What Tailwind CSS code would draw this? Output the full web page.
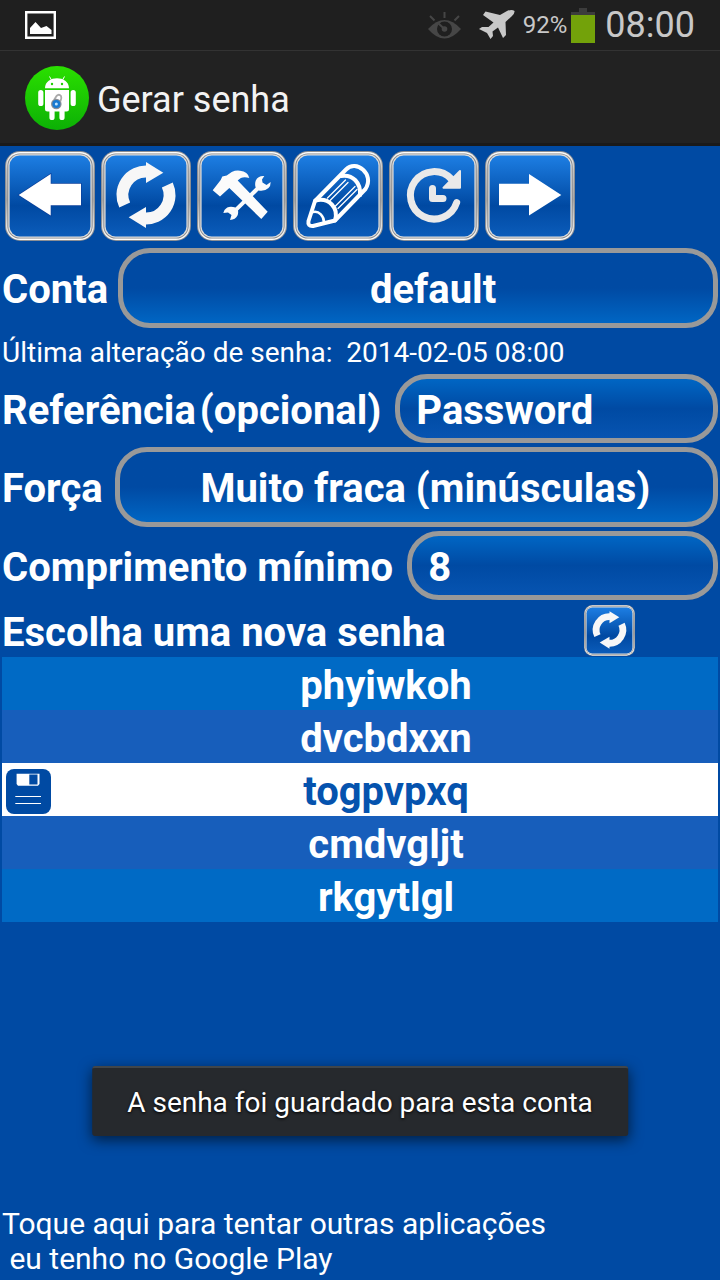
<!DOCTYPE html>
<html lang="pt">
<head>
<meta charset="utf-8">
<meta name="viewport" content="width=device-width, initial-scale=1">
<title>Gerar senha</title>
<script src="https://cdn.jsdelivr.net/npm/@tailwindcss/browser@4"></script>
</head>
<body class="relative flex min-h-screen flex-col bg-[#004aa3] font-[Roboto,sans-serif] text-white">

<!-- Shared drawings -->
<svg class="absolute size-0" aria-hidden="true">
  <defs>
    <linearGradient id="face" x1="0" y1="0" x2="0" y2="1">
      <stop offset="0" stop-color="#1d7ee3"/><stop offset=".62" stop-color="#0049a2"/><stop offset="1" stop-color="#0b5cba"/>
    </linearGradient>
    <linearGradient id="metal" x1="0" y1="0" x2="0" y2="1">
      <stop offset="0" stop-color="#fff"/><stop offset=".2" stop-color="#c4c4c4"/><stop offset=".55" stop-color="#a8a8a8"/><stop offset="1" stop-color="#fff"/>
    </linearGradient>
    <symbol id="frame" viewBox="0 0 90 90">
      <rect x="0" y="0" width="90" height="90" rx="15" fill="#8c8f94"/>
      <rect x="1" y="1" width="88" height="88" rx="14" fill="url(#metal)"/>
      <rect x="2.4" y="2.4" width="85.200" height="85.200" rx="12.500" fill="#85878a"/>
      <rect x="3.300" y="3.300" width="83.400" height="83.400" rx="11.500" fill="#dcdcdc"/>
      <rect x="4.600" y="4.600" width="80.800" height="80.800" rx="10" fill="url(#face)"/>
    </symbol>
    <symbol id="refresh" viewBox="0 0 90 90">
      <use href="#frame" width="90" height="90"/>
      <g id="half">
        <path d="M23.700 54A23.500 23.500 0 0 1 46 20.500" fill="none" stroke="#f7f7f7" stroke-width="12"/>
        <path d="M45 11L62.300 21.700L45 32Z" fill="#f7f7f7"/>
      </g>
      <use href="#half" transform="rotate(180 45 44)"/>
    </symbol>
  </defs>
</svg>

<div class="flex h-[51px] items-center justify-between border-b border-[#333] bg-[#1f1f1f] pr-[25px] pl-[25px] text-[#c8c8c8]">
  <svg class="h-7 w-[31px]" viewBox="0 0 31 28" aria-hidden="true"><path d="M1.200 1.200H29.800V26.800H1.200Z" fill="none" stroke="#fff" stroke-width="2.400"/><path d="M5 23V17L10.500 11L16 17L21.500 15L26.500 19V23Z" fill="#fff"/></svg>
  <div class="flex items-center">
    <svg class="mr-[18px] h-[27px] w-[33px]" viewBox="0 0 33 27" aria-hidden="true"><path d="M0 17Q16.500 -1 33 17Q16.500 36 0 17Z" fill="#464646"/><circle cx="16.500" cy="17" r="7.500" fill="#1f1f1f"/><circle cx="16.500" cy="17" r="2.800" fill="#464646"/><path d="M16.500 17L10.500 11.500M16.500 0V6M2 4L6.500 8.500M31 4L26.500 8.500" stroke="#464646" stroke-width="2"/></svg>
    <svg class="mr-2 h-[30px] w-9" viewBox="0 0 36 30" aria-hidden="true"><path d="M35.500 1Q36 3 33 6L26.500 12L27 25L24 28L19 17.500L13.500 21.500L14 26L11.500 29L8 23L0 19L3 17L9.500 17L14.500 12.500L4 5L6.500 1.500L21 5L28 1Q33 -1 35.500 1Z" fill="#c8c8c8"/></svg>
    <span class="text-2xl">92%</span>
    <svg class="mx-1 h-[35px] w-6" viewBox="0 0 24 35" aria-hidden="true"><path d="M8 0H16V4H24V8H0V4H8Z" fill="#3c3c3c"/><path d="M0 7H24V35H0Z" fill="#73a20a"/></svg>
    <time class="ml-1.5 text-4xl leading-none">08:00</time>
  </div>
</div>

<header class="flex h-[95px] items-center gap-2 border-b-[3px] border-[#1a1a1a] bg-[#222] pt-0.5 pl-[25px]">
  <svg class="size-16" viewBox="0 0 64 64" aria-hidden="true">
    <defs><linearGradient id="green" x1="0" y1="0" x2="0" y2="1"><stop offset="0" stop-color="#2be000"/><stop offset="1" stop-color="#0cb005"/></linearGradient></defs>
    <circle cx="32" cy="32" r="32" fill="url(#green)"/>
    <path d="M20 22.300C20 9 44 9 44 22.300ZM20 24H44V43Q44 45.500 41.500 45.500H22.500Q20 45.500 20 43Z" fill="#fff"/>
    <path d="M24.500 10.500L27 15M39.500 10.500L37 15" stroke="#fff" stroke-width="1"/>
    <path d="M15.800 26.500V37.500M48.200 26.500V37.500M27 44V51.500M37 44V51.500" stroke="#fff" stroke-width="5.200" stroke-linecap="round"/>
    <circle cx="27" cy="18" r="1.200" fill="#1fcf02"/><circle cx="37" cy="18" r="1.200" fill="#1fcf02"/>
    <path d="M29 34L31.500 30Q34 27.500 36 30Q37 32 35.500 35" fill="none" stroke="#aaa" stroke-width="1.800"/>
    <circle cx="31.300" cy="38" r="5.300" fill="#8b8f95"/><circle cx="31.300" cy="38" r="4" fill="#1779d2"/><circle cx="31.300" cy="38" r="1.500" fill="#bfe4ff"/>
  </svg>
  <h1 class="pt-1 text-4xl text-[#f3f3f3]">Gerar senha</h1>
</header>

<nav class="flex gap-1.5 px-[5px] pt-[5px] pb-[7px]" aria-label="Ferramentas">
  <button type="button" aria-label="Voltar" class="size-[90px]"><svg class="size-full" viewBox="0 0 90 90"><use href="#frame" width="90" height="90"/><path d="M13.700 44L45.700 23V32.700H76V54.300H45.700V64.500Z" fill="#fff" stroke="#0b3f9a" stroke-width="1.400" paint-order="stroke"/></svg></button>
  <button type="button" aria-label="Atualizar" class="size-[90px]"><svg class="size-full" viewBox="0 0 90 90"><use href="#refresh" width="90" height="90"/></svg></button>
  <button type="button" aria-label="Configurações" class="size-[90px]"><svg class="size-full" viewBox="0 0 90 90"><use href="#frame" width="90" height="90"/><g fill="#fbfbfb"><path d="M15.700 39.300L23.700 29L25.300 25.500L29.700 24.500L34.700 21Q39 19 43 19.700Q51 20.500 52.300 27Q45 24.500 40.700 29.500L70.700 60.700L64.300 68L32.300 37L23 45.500Z"/><path d="M67.300 25Q61 24.500 58.800 29.500Q57.500 33 58.700 36.500L38.500 56.500Q31 54 27.500 59L26.300 62L31 61.500L34.500 64L33 69Q38.500 68.500 40.500 64.500Q41.500 62 41 59.500L61.500 39.500Q68 40.500 71.500 37Q73.700 35 73.700 31L69.500 34L65.500 31.500L65 28.500Z"/></g></svg></button>
  <button type="button" aria-label="Editar" class="size-[90px]"><svg class="size-full" viewBox="0 0 90 90"><use href="#frame" width="90" height="90"/><g fill="none" stroke="#fff" stroke-width="4" stroke-linecap="round" stroke-linejoin="round"><path d="M15.500 70L22 50L53 18.500C63 8 82 23 72.500 38L42 69.500L20 75Q14.500 75.500 15.500 70Z"/><path d="M22.500 49.500C36 46 46 57 42 69.500M48 25C60 23 68 32 67 44"/><path d="M20.500 61C26 60 31 65 31 71.500" stroke-width="2.500"/><path d="M34.500 47L52.500 29M37 49.500L55 31.500M42.500 55L62 35.500M45 57.500L64 38.500" stroke-width="1.300"/></g></svg></button>
  <button type="button" aria-label="Histórico" class="size-[90px]"><svg class="size-full" viewBox="0 0 90 90"><use href="#frame" width="90" height="90"/><g fill="none" stroke="#e9e9e9" stroke-width="7" stroke-linecap="round" stroke-linejoin="round"><path d="M67.700 51.500A23.700 23.700 0 1 1 62.300 28"/><path d="M43.500 37.500V47.500H54"/></g><path d="M71 20V36.700H54.500Z" fill="#e9e9e9" stroke="#e9e9e9" stroke-width="2" stroke-linejoin="round"/></svg></button>
  <button type="button" aria-label="Avançar" class="size-[90px]"><svg class="size-full" viewBox="0 0 90 90"><use href="#frame" width="90" height="90"/><path d="M76.300 44L44 23V32.700H14V54.300H44V64.500Z" fill="#fff"/></svg></button>
</nav>

<main class="px-0.5">
  <form class="flex flex-col gap-1 text-[40px] leading-none font-bold">
    <div class="flex items-center gap-2.5">
      <label for="conta" class="pt-1">Conta</label>
      <select id="conta" class="h-20 min-w-0 flex-1 appearance-none rounded-[32px] border-5 border-[#999] bg-linear-to-b from-[#004aa3] from-50% to-[#0066c4] pt-1 pl-[30px] [text-align-last:center]"><option>default</option></select>
    </div>
    <p class="h-[38px] text-[28px] leading-[42px] font-normal whitespace-pre">Última alteração de senha:  2014-02-05 08:00</p>
    <div class="flex items-center gap-3.5">
      <label for="ref" class="flex gap-1 pt-1"><span>Referência</span><span>(opcional)</span></label>
      <input id="ref" type="text" value="Password" class="h-[69px] min-w-0 flex-1 rounded-[32px] border-5 border-[#999] bg-linear-to-b from-[#0066c4] via-[#004aa3] to-[#0754b1] px-4 pt-1">
    </div>
    <div class="flex items-center gap-3">
      <label for="forca" class="pt-1">Força</label>
      <select id="forca" class="h-20 min-w-0 flex-1 appearance-none rounded-[32px] border-5 border-[#999] bg-linear-to-b from-[#004aa3] from-50% to-[#0066c4] pt-1 pl-[18px] [text-align-last:center]"><option>Muito fraca (minúsculas)</option></select>
    </div>
    <div class="flex items-center gap-3.5">
      <label for="min" class="pt-1">Comprimento mínimo</label>
      <input id="min" type="text" inputmode="numeric" value="8" class="h-[69px] min-w-0 flex-1 rounded-[32px] border-5 border-[#999] bg-linear-to-b from-[#0066c4] via-[#004aa3] to-[#0754b1] px-4 pt-1">
    </div>
    <fieldset>
      <div class="flex h-[53px] items-center justify-between pr-[83px]">
        <h2 id="escolha" class="pt-1">Escolha uma nova senha</h2>
        <button type="button" aria-label="Gerar outras senhas" class="size-[51px]"><svg class="size-full" viewBox="0 0 90 90"><use href="#refresh" width="90" height="90"/></svg></button>
      </div>
      <div role="radiogroup" aria-labelledby="escolha" class="text-center leading-[49px]">
        <label class="relative block bg-[#006ac5] pt-1 pl-[52px]"><input type="radio" name="senha" class="sr-only">phyiwkoh</label>
        <label class="relative block bg-[#175ebb] pt-1 pl-[52px]"><input type="radio" name="senha" class="sr-only">dvcbdxxn</label>
        <div class="flex items-center bg-white pt-1 pl-1 text-[#0553ae]">
          <button type="button" aria-label="Guardar senha" class="size-[45px]"><svg class="size-full" viewBox="0 0 45 45"><rect width="45" height="45" rx="8" fill="#004aa3"/><path d="M10.600 4.700H33.500V15L32 16.700H12L10.600 15Z" fill="#fff"/><path d="M23.300 5.500H31.500V15.500H23.300Z" fill="#004aa3"/><path d="M9.300 27.500H35M9.300 34.500H35" stroke="#fff"/></svg></button>
          <label class="relative block flex-1 pl-[3px]"><input type="radio" name="senha" class="sr-only" checked>togpvpxq</label>
        </div>
        <label class="relative block bg-[#175ebb] pt-1 pl-[52px]"><input type="radio" name="senha" class="sr-only">cmdvgljt</label>
        <label class="relative block bg-[#006ac5] pt-1 pl-[52px]"><input type="radio" name="senha" class="sr-only">rkgytlgl</label>
      </div>
    </fieldset>
  </form>
</main>

<footer class="mt-auto px-0.5 pb-1 text-[30px] leading-[35px]">
  <a href="#" class="block">Toque aqui para tentar outras aplicações<br>&nbsp;eu tenho no Google Play</a>
</footer>

<div role="status" class="absolute bottom-36 left-1/2 -translate-x-1/2 rounded-[3px] border-t-2 border-[#41464a] bg-[#26292d] px-[35px] pt-[17px] pb-[15px] text-[28px] leading-9 whitespace-nowrap shadow-[0_4px_14px_rgba(0,0,0,0.6)] text-shadow-[0_1px_3px_#000]">A senha foi guardado para esta conta</div>
</body>
</html>
